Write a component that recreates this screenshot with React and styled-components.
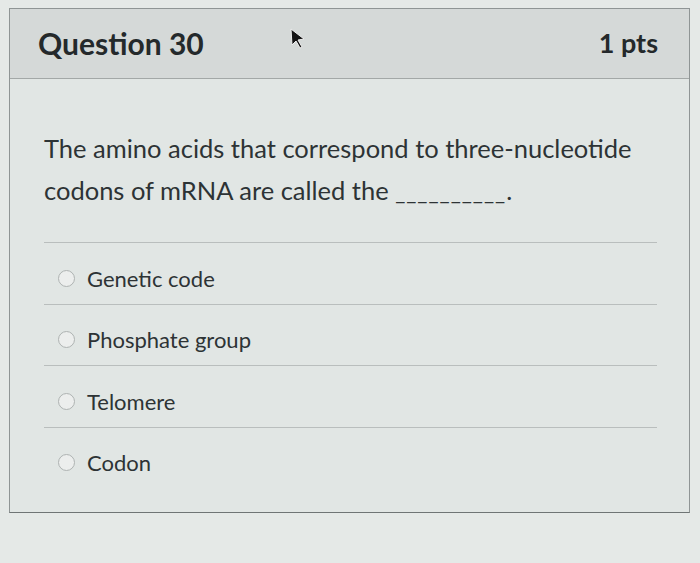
import styled, { createGlobalStyle } from "styled-components"

const GlobalStyle = createGlobalStyle`
  html, body {
    margin: 0;
    padding: 0;
    background: #e5e9e7;
    font-family: Lato, "Open Sans", sans-serif;
    color: #2d3335;
  }
`

const Page = styled.div`
  width: 700px;
  height: 563px;
  padding: 8px 0 0 9px;
  box-sizing: border-box;
  overflow: hidden;
`

const Card = styled.section`
  position: relative;
  width: 681px;
  height: 505px;
  box-sizing: border-box;
  background: #e1e6e4;
  border: 1px solid #8f9595;
  border-bottom-color: #6f7575;
`

const Header = styled.header`
  height: 70px;
  box-sizing: border-box;
  display: flex;
  align-items: center;
  justify-content: space-between;
  padding: 0 31px 2px 28px;
  background: #d5d9d8;
  border-bottom: 1px solid #a3a8a7;
`

const Title = styled.h2`
  margin: 0;
  font-size: 30px;
  font-weight: 700;
  color: #24292b;
`

const Points = styled.span`
  font-size: 27px;
  font-weight: 700;
  color: #24292b;
`

const Cursor = styled.svg`
  position: absolute;
  left: 278px;
  top: 18px;
`

const Body = styled.div`
  padding: 48px 32px 0 34px;
`

const Question = styled.p`
  margin: 0 0 29px;
  font-size: 25.5px;
  line-height: 42px;
  color: #2d3335;
`

const Blank = styled.span`
  letter-spacing: 1px;
  font-size: 22px;
`

const Answers = styled.ul`
  list-style: none;
  margin: 0;
  padding: 0;
`

const Answer = styled.li`
  display: flex;
  align-items: center;
  gap: 12px;
  height: 61.5px;
  box-sizing: border-box;
  padding: 10px 0 0 14px;
  border-top: 1px solid #b9bebd;
  font-size: 22px;
  color: #2d3335;
`

const Radio = styled.span`
  width: 17px;
  height: 17px;
  flex: none;
  border-radius: 50%;
  border: 1.5px solid #aeb3b2;
  background: #eceeed;
  box-sizing: border-box;
`

const options = ["Genetic code", "Phosphate group", "Telomere", "Codon"]

export default function App() {
  return (
    <Page>
      <GlobalStyle />
      <Card>
        <Header>
          <Title>Question 30</Title>
          <Points>1 pts</Points>
        </Header>
        <Cursor width="18" height="24" viewBox="0 0 18 24">
          <path d="M3 2 L4 18 L8 14 L12 21 L14 20 L10 13 L16 12 Z" fill="#151515" stroke="#eeeeee" strokeWidth="1" />
        </Cursor>
        <Body>
          <Question>
            The amino acids that correspond to three-nucleotide codons of mRNA are called the <Blank>__________</Blank>.
          </Question>
          <Answers>
            {options.map((opt) => (
              <Answer key={opt}>
                <Radio />
                {opt}
              </Answer>
            ))}
          </Answers>
        </Body>
      </Card>
    </Page>
  )
}
